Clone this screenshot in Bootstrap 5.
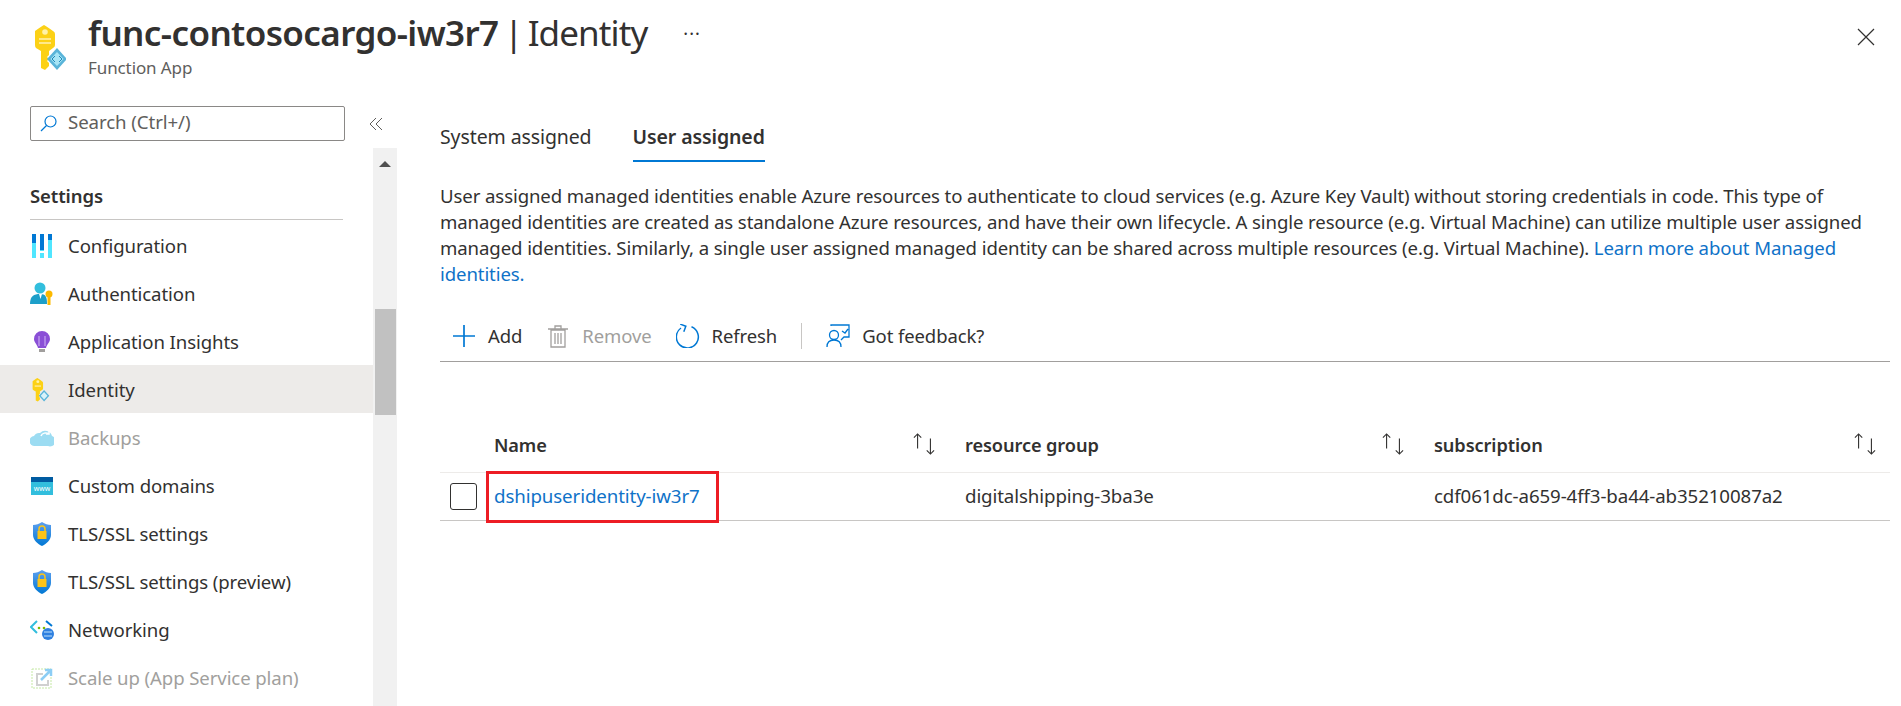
<!DOCTYPE html>
<html lang="en"><head><meta charset="utf-8"><title>Identity</title>
<link rel="stylesheet" href="https://cdn.jsdelivr.net/npm/bootstrap@5.3.0/dist/css/bootstrap.min.css">
<style>
html,body{height:706px;overflow:hidden;background:#fff}
body{font-family:"Noto Sans","Open Sans",sans-serif;font-size:18.5px;color:#323130;letter-spacing:-.1px}
.hdr{height:106px;padding:10px 0 0 30px}
.hdr-ico{width:36px;height:46px;margin-top:15px;margin-right:22px;flex:none}
.ttl{font-size:35px;line-height:46px;font-weight:600;letter-spacing:-.6px;margin:0;white-space:nowrap;word-spacing:-3px}
.ttl span{font-weight:400;letter-spacing:-.9px}
.sub{font-size:17px;color:#605e5c;line-height:22px;margin-top:1px}
.dots{margin-left:36px;font-size:18px;line-height:46px;letter-spacing:1px}
.closex{width:18px;height:18px;margin:18px 26px 0 auto;flex:none}
.side{width:397px;flex:none;position:relative;height:600px;overflow:hidden}
.srch{width:315px;height:35px;margin-left:30px;border:1px solid #8a8886;border-radius:2px;padding:0 9px 3px;color:#605e5c;font-size:18.7px}
.srch svg{margin:3px 3px 0 0}
.coll{margin-left:24px}
.sethd{font-weight:600;padding:0 0 0 30px;margin-top:42px;font-size:18.5px;height:36px;line-height:26px}
.setrule{width:313px;margin:0 0 1px 30px;border-top:1px solid #c8c6c4}
.side .list-group{width:373px;--bs-list-group-bg:transparent;--bs-list-group-border-width:0}
.mi{height:48px;padding:2px 0 0 30px;color:#323130;font-size:18.6px;border:0}
.mi.on{background:#edebe9}
.mi.off{color:#a19f9d}
.mi svg{width:24px;height:24px;margin-right:14px;flex:none}
.sb{position:absolute;right:0;top:42px;bottom:0;width:24px;background:#f1f1f1}
.sb-up{width:0;height:0;margin:13px auto 0;border:6px solid transparent;border-top:0;border-bottom:6px solid #505050}
.sb-th{width:21px;height:106px;margin:142px auto 0;background:#c1c1c1}
.main{flex:1;padding:0 11px 0 43px;min-width:0}
.tabs{gap:41px;height:56px;margin-top:8px}
.tabi{height:48px;line-height:46px;padding:0;color:#323130;font-size:19.5px}
.tabi.on{font-weight:600;border-bottom:2px solid #0078d4}
.desc{font-size:18.6px;line-height:26px;margin:13px 0 0;color:#323130}
.desc a,.grid a{color:#0f72c8;text-decoration:none}
.tb{height:54px;margin-top:21px;border-bottom:1px solid #a19f9d;font-size:18.5px;padding:2px 0 0 12px}
.tb svg{width:24px;height:24px;margin-right:12px;flex:none}
.tbi{margin-right:24px}
.tbi.off{color:#a19f9d}
.tbsep{width:1px;height:26px;background:#c8c6c4;margin:0 24px 0 0}
.grid{margin-top:56px;table-layout:fixed;font-size:18.7px;--bs-table-bg:transparent;--bs-table-color:#323130}
.grid th,.grid td{padding:0;vertical-align:middle;white-space:nowrap;position:relative}
.grid thead th{height:54px;padding-top:2px;border-bottom:1px solid #edebe9;font-weight:600;font-size:18.2px}
.grid tbody td{height:48px;border-bottom:1px solid #c8c6c4;padding-top:1px}
.c0{width:54px}.c1{width:471px}.c2{width:469px}
.sort{position:absolute;right:29px;top:15px;width:24px;height:22px}
.sort.last{right:13px}
.chk{width:27px;height:27px;border:1px solid #323130;border-radius:3px;margin:0 0 0 10px}
.mark-red{position:absolute;left:-8px;top:-2px;width:233px;height:52px;border:3px solid #ed1c24;pointer-events:none}
.www{font-size:7px;fill:#fff;letter-spacing:0}
</style></head><body>
<svg width="0" height="0" class="d-block"><defs><linearGradient id="sh" x1="0" y1="0" x2="0" y2="1"><stop offset="0" stop-color="#5ea0ef"/><stop offset="1" stop-color="#0078d4"/></linearGradient></defs></svg>
<div class="d-flex hdr">
<svg class="hdr-ico" viewBox="0 0 36 46"><path d="M5 6Q12 1 14 0q2 1 9 6q2 1 2 3V20q0 2-2 3l-4 3v4l-2 2 2 2-2 2 2 2v3l-4 4-4-2V26L6 23q-1-1-1-3V9q0-2 0-3z" fill="#fcd116"/><circle cx="15" cy="7" r="2.800" fill="#fff2a8"/><rect x="9" y="13" width="12" height="2" fill="#ffe98a"/><rect x="9" y="17" width="12" height="2" fill="#ffe98a"/><path d="M37 34 27 45 17 34 27 23z" fill="#59b4d9"/><path d="M27 27l6.500 7-6.500 7-6.500-7z" fill="#a6e4f5"/><path d="M25 31l-3 3 3 3m4-6 3 3-3 3" fill="none" stroke="#1e88b8"/></svg>
<div><h1 class="ttl">func-contosocargo-iw3r7 <span>| Identity</span></h1><div class="sub">Function App</div></div>
<div class="dots">···</div>
<svg class="closex" viewBox="0 0 18 18"><path d="M1 1l16 16M17 1 1 17" stroke="#323130" stroke-width="1.200" fill="none"/></svg>
</div>
<div class="d-flex">
<div class="side">
<div class="d-flex align-items-center">
<div class="srch d-flex align-items-center gap-2"><svg width="17" height="17" viewBox="0 0 17 17"><circle cx="10.500" cy="6.500" r="5.500" fill="none" stroke="#0078d4" stroke-width="1.200"/><path d="M6.500 10.500 1 16" stroke="#0078d4" stroke-width="1.300"/></svg><span>Search (Ctrl+/)</span></div>
<svg class="coll" width="14" height="14" viewBox="0 0 14 14"><path d="M7 1 1 7l6 6M13 1 7 7l6 6" fill="none" stroke="#605e5c"/></svg>
</div>
<div class="sethd">Settings</div><div class="setrule"></div>
<div class="list-group list-group-flush">
<a class="list-group-item mi d-flex align-items-center"><svg viewBox="0 0 24 24"><rect x="2" y="0" width="4" height="24" fill="#50e6ff"/><rect x="2" y="0" width="4" height="9" fill="#0078d4"/><rect x="10" y="0" width="4" height="24" fill="#50e6ff"/><rect x="10" y="0" width="4" height="16" fill="#0078d4"/><rect x="10" y="17" width="4" height="2" fill="#fff"/><rect x="18" y="0" width="4" height="24" fill="#50e6ff"/><rect x="18" y="0" width="4" height="6" fill="#0078d4"/></svg>Configuration</a>
<a class="list-group-item mi d-flex align-items-center"><svg viewBox="0 0 24 24"><circle cx="10" cy="6" r="5.500" fill="#32bedd"/><path d="M0 22c0-8 4-10 10-10s7 3 7 10z" fill="#1d9fc9"/><path d="M9 12h3l-1.500 5z" fill="#fff"/><circle cx="19" cy="12" r="3.500" fill="#fcb900"/><rect x="17.500" y="14" width="3" height="9" fill="#fcb900"/></svg>Authentication</a>
<a class="list-group-item mi d-flex align-items-center"><svg viewBox="0 0 24 24"><path d="M12 1a8 8 0 0 0-8 8c0 3.500 3 5 4 9h8c1-4 4-5.500 4-9a8 8 0 0 0-8-8z" fill="#8a4fd6"/><path d="M9 8v8M15 8v8M8 7h2M14 7h2" stroke="#d2b8f5" fill="none"/><rect x="9" y="19" width="6" height="3" fill="#a19f9d"/></svg>Application Insights</a>
<a class="list-group-item mi on d-flex align-items-center"><svg viewBox="0 0 36 46" preserveAspectRatio="xMinYMid"><path d="M5 6Q12 1 14 0q2 1 9 6q2 1 2 3V20q0 2-2 3l-4 3v4l-2 2 2 2-2 2 2 2v3l-4 4-4-2V26L6 23q-1-1-1-3V9q0-2 0-3z" fill="#fcd116"/><rect x="9" y="14" width="12" height="3" fill="#ffe98a"/><circle cx="15" cy="7" r="2.800" fill="#fff2a8"/><path d="M37 34 27 45 17 34 27 23z" fill="#59b4d9"/><path d="M27 27l6.500 7-6.500 7-6.500-7z" fill="#d8f2fa"/></svg>Identity</a>
<a class="list-group-item mi off d-flex align-items-center"><svg viewBox="0 0 24 24"><path d="M5 20a5 5 0 0 1-1-10 6 6 0 0 1 6-3 7 7 0 0 1 12 3 5 5 0 0 1-4 10z" fill="#9cdcf2"/><path d="M11 10c1-3 5-4 8-2M19 5v3h-3" stroke="#fff" fill="none" stroke-width="1.500"/></svg>Backups</a>
<a class="list-group-item mi d-flex align-items-center"><svg viewBox="0 0 24 24"><rect x="1" y="3" width="22" height="18" fill="#32bedd"/><rect x="1" y="3" width="22" height="5" fill="#005ba1"/><text x="12" y="17" text-anchor="middle" class="www">www</text></svg>Custom domains</a>
<a class="list-group-item mi d-flex align-items-center"><svg viewBox="0 0 24 24"><path d="M12 0c3 2 6 3 9 3v10c0 5-5 9-9 11-4-2-9-6-9-11V3c3 0 6-1 9-3z" fill="url(#sh)"/><rect x="7.500" y="9" width="9" height="8" fill="#fcc419"/><path d="M9 9V7a3 3 0 0 1 6 0v2" fill="none" stroke="#fcc419" stroke-width="1.500"/></svg>TLS/SSL settings</a>
<a class="list-group-item mi d-flex align-items-center"><svg viewBox="0 0 24 24"><path d="M12 0c3 2 6 3 9 3v10c0 5-5 9-9 11-4-2-9-6-9-11V3c3 0 6-1 9-3z" fill="url(#sh)"/><rect x="7.500" y="9" width="9" height="8" fill="#fcc419"/><path d="M9 9V7a3 3 0 0 1 6 0v2" fill="none" stroke="#fcc419" stroke-width="1.500"/></svg>TLS/SSL settings (preview)</a>
<a class="list-group-item mi d-flex align-items-center"><svg viewBox="0 0 24 24"><path d="M7 3 1 9l6 6" fill="none" stroke="#32bedd" stroke-width="2"/><path d="M16 3l6 5" fill="none" stroke="#0078d4" stroke-width="2"/><circle cx="9" cy="10" r="1.300" fill="#7fba00"/><circle cx="14" cy="10" r="1.300" fill="#7fba00"/><circle cx="18" cy="16" r="6" fill="#2f80e0"/><path d="M14 14h8M14 18h8" stroke="#bde0fa"/></svg>Networking</a>
<a class="list-group-item mi off d-flex align-items-center"><svg viewBox="0 0 24 24"><rect x="2" y="3" width="19" height="19" fill="none" stroke="#c5e8a5" stroke-dasharray="2 1"/><path d="M6 7h7v2H8v9h9v-4h2v6H6z" fill="#d0d0d0"/><path d="M11 14l9-9M15 4h6v6" stroke="#8ccdf5" stroke-width="2.500" fill="none"/></svg>Scale up (App Service plan)</a>
</div>
<div class="sb"><div class="sb-up"></div><div class="sb-th"></div></div>
</div>
<div class="main">
<div class="d-flex tabs"><div class="tabi">System assigned</div><div class="tabi on">User assigned</div></div>
<p class="desc">User assigned managed identities enable Azure resources to authenticate to cloud services (e.g. Azure Key Vault) without storing credentials in code. This type of managed identities are created as standalone Azure resources, and have their own lifecycle. A single resource (e.g. Virtual Machine) can utilize multiple user assigned managed identities. Similarly, a single user assigned managed identity can be shared across multiple resources (e.g. Virtual Machine). <a href="#">Learn more about Managed identities.</a></p>
<div class="d-flex align-items-center tb">
<div class="d-flex align-items-center tbi"><svg viewBox="0 0 24 24"><path d="M12 1v22M1 12h22" stroke="#0078d4" stroke-width="1.700" fill="none"/></svg>Add</div>
<div class="d-flex align-items-center tbi off"><svg viewBox="0 0 24 24"><path d="M5 6h14v17H5zM2 5h20M9 5V2h6v3M9 9v11M12 9v11M15 9v11" stroke="#a19f9d" stroke-width="1.300" fill="none"/></svg>Remove</div>
<div class="d-flex align-items-center tbi"><svg viewBox="0 0 24 24"><path d="M15.500 2.800A11 11 0 1 1 5 4" fill="none" stroke="#0078d4" stroke-width="1.500"/><path d="M3 1h6v6" fill="none" stroke="#0078d4" stroke-width="1.500" transform="rotate(20 6 4)"/></svg>Refresh</div>
<div class="tbsep"></div>
<div class="d-flex align-items-center"><svg viewBox="0 0 24 24"><circle cx="8" cy="11" r="4.500" fill="none" stroke="#0078d4" stroke-width="1.300"/><path d="M1 23c0-5 3-7 7-7s7 2 7 7M5 2V1h18v12h-5l-3 3M16 7l3 2 3-4" fill="none" stroke="#0078d4" stroke-width="1.300"/></svg>Got feedback?</div>
</div>
<table class="table grid mb-0"><thead><tr><th class="c0"></th><th class="c1">Name<svg class="sort" viewBox="0 0 24 24"><path d="M5 17V1M1 5l4-4 4 4M19 6v17M15 19l4 4 4-4" stroke="#323130" fill="none" stroke-width="1.200"/></svg></th><th class="c2">resource group<svg class="sort" viewBox="0 0 24 24"><path d="M5 17V1M1 5l4-4 4 4M19 6v17M15 19l4 4 4-4" stroke="#323130" fill="none" stroke-width="1.200"/></svg></th><th>subscription<svg class="sort last" viewBox="0 0 24 24"><path d="M5 17V1M1 5l4-4 4 4M19 6v17M15 19l4 4 4-4" stroke="#323130" fill="none" stroke-width="1.200"/></svg></th></tr></thead>
<tbody><tr><td><div class="chk"></div></td><td><a href="#">dshipuseridentity-iw3r7</a><div class="mark-red"></div></td><td>digitalshipping-3ba3e</td><td>cdf061dc-a659-4ff3-ba44-ab35210087a2</td></tr></tbody></table>
</div>
</div>
</body></html>
